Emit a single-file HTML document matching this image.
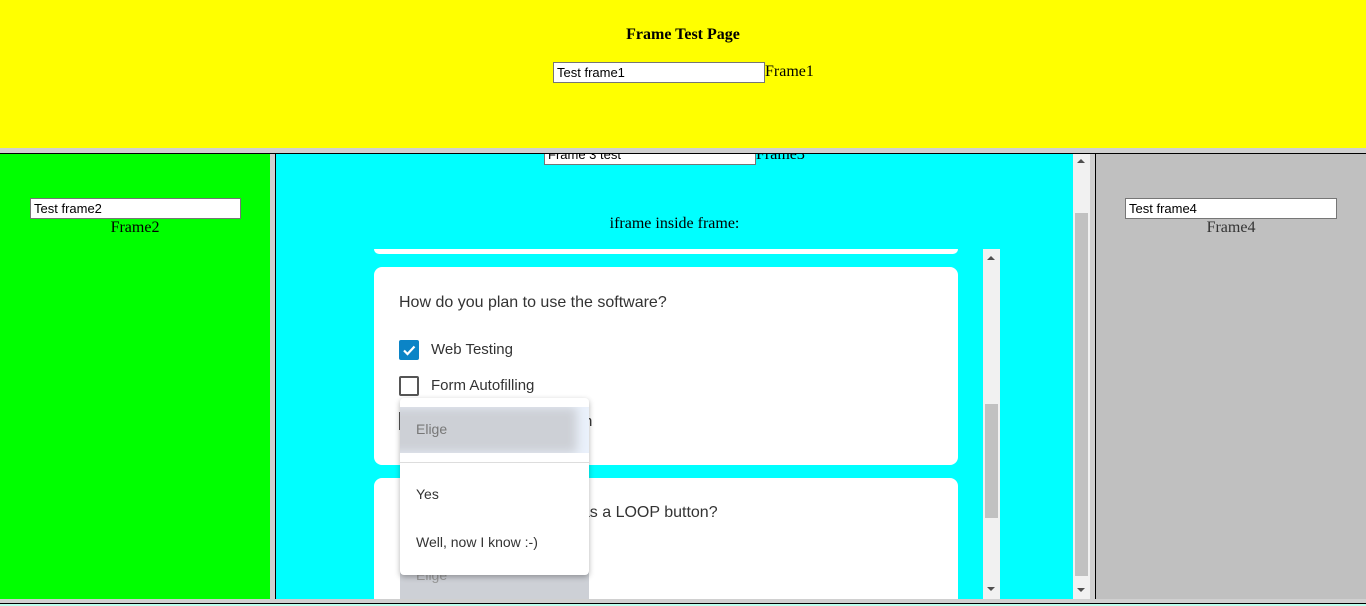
<!DOCTYPE html>
<html><head><style>
*{margin:0;padding:0;box-sizing:border-box}
body{width:1366px;height:606px;overflow:hidden;position:relative;background:#d0d0d0;font-family:"Liberation Serif",serif;font-size:16px}
.a{position:absolute}
.inp{position:absolute;height:21px;background:#fff;border:1px solid #767676;font-family:"Liberation Sans",sans-serif;font-size:13px;padding:2px 3px;line-height:15px;color:#000}
.r{font-family:"Liberation Sans",sans-serif;color:#333}
.sb{background:#f1f1f1}
.tri{position:absolute;width:0;height:0;border-left:4px solid transparent;border-right:4px solid transparent}
</style></head><body>
<div class="a" style="left:0;top:0;width:1366px;height:148px;background:#ff0"></div>
<div class="a" style="left:0;top:26px;width:1366px;text-align:center;font-weight:bold;font-size:16px">Frame Test Page</div>
<div class="inp" style="left:553px;top:62px;width:212px">Test frame1</div>
<div class="a" style="left:765px;top:63px">Frame1</div>

<div class="a" style="left:0;top:153px;width:1366px;height:1px;background:#000"></div>
<div class="a" style="left:0;top:154px;width:270px;height:445px;background:#0f0"></div>
<div class="a" style="left:275px;top:153px;width:1px;height:447px;background:#000"></div>
<div class="inp" style="left:30px;top:198px;width:211px">Test frame2</div>
<div class="a" style="left:0;top:219px;width:270px;text-align:center;font-size:16px">Frame2</div>

<div class="a" style="left:276px;top:154px;width:797px;height:445px;background:#0ff;overflow:hidden">
  <div class="inp" style="left:268px;top:-10px;width:212px">Frame 3 test</div>
  <div class="a" style="left:480px;top:-8px">Frame3</div>
  <div class="a" style="left:0;top:61px;width:797px;text-align:center;font-size:16px">iframe inside frame:</div>
  <div class="a" style="left:98px;top:95px;width:584px;height:5px;background:#fff;border-radius:0 0 8px 8px"></div>
  <div class="a" style="left:98px;top:113px;width:584px;height:198px;background:#fff;border-radius:8px"></div>
  <div class="a r" style="left:123px;top:140px;font-size:16px">How do you plan to use the software?</div>
  <div class="a" style="left:123px;top:186px;width:20px;height:20px;background:#0b84c6;border-radius:2px"><svg width="20" height="20"><path d="M5 10.5l3.5 3.5 7-7.5" stroke="#fff" stroke-width="2.2" fill="none"/></svg></div>
  <div class="a r" style="left:155px;top:187px;font-size:15px">Web Testing</div>
  <div class="a" style="left:123px;top:222px;width:20px;height:20px;border:2px solid #555;border-radius:2px"></div>
  <div class="a r" style="left:155px;top:223px;font-size:15px">Form Autofilling</div>
  <div class="a" style="left:123px;top:258px;width:2px;height:18px;background:#555"></div>
  <div class="a r" style="left:308px;top:259px;font-size:15px">n</div>
  <div class="a" style="left:98px;top:324px;width:584px;height:130px;background:#fff;border-radius:8px"></div>
  <div class="a r" style="left:296px;top:350px;font-size:16px">has a LOOP button?</div>
  <div class="a" style="left:124px;top:410px;width:189px;height:40px;background:#cdd0d6;border-radius:4px"></div>
  <div class="a r" style="left:140px;top:413px;font-size:14px;color:#999">Elige</div>
  <div class="a" style="left:124px;top:244px;width:189px;height:177px;background:#fff;border-radius:4px;box-shadow:0 2px 6px rgba(0,0,0,.3)"></div>
  <div class="a" style="left:124px;top:253px;width:189px;height:46px;background:#cdd0d6;box-shadow:inset -12px 0 10px #eaf1fb"></div>
  <div class="a r" style="left:140px;top:267px;font-size:14px;color:#777">Elige</div>
  <div class="a" style="left:124px;top:308px;width:189px;height:1px;background:#ddd"></div>
  <div class="a r" style="left:140px;top:332px;font-size:14px">Yes</div>
  <div class="a r" style="left:140px;top:380px;font-size:14px">Well, now I know :-)</div>
  <div class="a sb" style="left:707px;top:95px;width:17px;height:350px"></div>
  <div class="a" style="left:709px;top:250px;width:13px;height:114px;background:#c1c1c1"></div>
  <div class="tri" style="left:711px;top:102px;border-bottom:4px solid #505050"></div>
  <div class="tri" style="left:711px;top:433px;border-top:4px solid #505050"></div>
</div>
<div class="a sb" style="left:1073px;top:154px;width:17px;height:445px"></div>
<div class="a" style="left:1075px;top:213px;width:13px;height:363px;background:#c1c1c1"></div>
<div class="tri" style="left:1077px;top:159px;border-bottom:4px solid #505050"></div>
<div class="tri" style="left:1077px;top:588px;border-top:4px solid #505050"></div>

<div class="a" style="left:1095px;top:153px;width:1px;height:447px;background:#000"></div>
<div class="a" style="left:1096px;top:154px;width:270px;height:445px;background:#c0c0c0"></div>
<div class="inp" style="left:1125px;top:198px;width:212px">Test frame4</div>
<div class="a" style="left:1096px;top:219px;width:270px;text-align:center;font-size:16px;color:#333">Frame4</div>

<div class="a" style="left:0;top:599px;width:1366px;height:4px;background:#d0d0d0"></div>
<div class="a" style="left:0;top:603px;width:1366px;height:1px;background:#000"></div>
<div class="a" style="left:0;top:604px;width:1366px;height:2px;background:#bfe"></div>
</body></html>
